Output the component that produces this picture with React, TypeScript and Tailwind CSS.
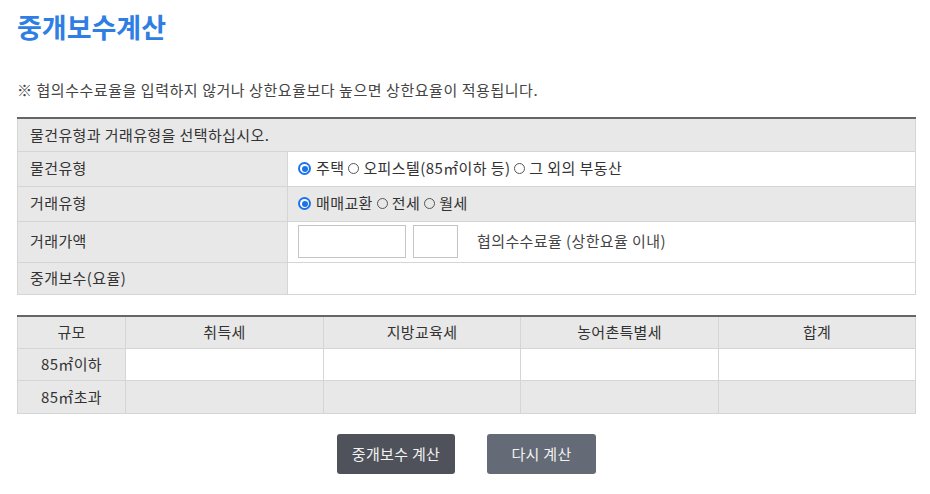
import React, { useState } from 'react';

const font = { fontFamily: '"Noto Sans CJK KR", "Noto Sans", sans-serif' };

const Radio: React.FC<{ checked: boolean; onClick: () => void }> = ({ checked, onClick }) =>
  checked ? (
    <span onClick={onClick} className="inline-flex w-[13px] h-[13px] rounded-full bg-[#1a73e8] items-center justify-center mr-[5px] cursor-pointer">
      <span className="w-[9px] h-[9px] rounded-full bg-white flex items-center justify-center">
        <span className="w-[6px] h-[6px] rounded-full bg-[#1a73e8]" />
      </span>
    </span>
  ) : (
    <span onClick={onClick} className="inline-block w-[11px] h-[11px] rounded-full border border-[#555] mr-[4px] ml-[4px] cursor-pointer" />
  );

const App: React.FC = () => {
  const [houseType, setHouseType] = useState(0);
  const [dealType, setDealType] = useState(0);
  const houseTypes = ['주택', '오피스텔(85㎡이하 등)', '그 외의 부동산'];
  const dealTypes = ['매매교환', '전세', '월세'];

  return (
    <div className="bg-white w-[930px] h-[494px] text-[#333]" style={font}>
      <div className="pl-[17px] w-[916px]">
        <h1 className="pt-[9px] text-[27px] leading-[36px] font-bold text-[#2f7ee3]">중개보수계산</h1>

        <p className="mt-[35px] text-[15px] leading-[20px] text-[#444] tracking-[0.55px]">
          ※ 협의수수료율을 입력하지 않거나 상한요율보다 높으면 상한요율이 적용됩니다.
        </p>

        <table className="mt-[17px] w-[899px] border-collapse border-t-2 border-t-[#666] text-[15px] tracking-[0.4px] text-[#333]">
          <tbody>
            <tr className="h-[33px] bg-[#e8e8e8]">
              <td colSpan={2} className="border border-[#d5d5d5] border-t-0 pl-[12px]">물건유형과 거래유형을 선택하십시오.</td>
            </tr>
            <tr className="h-[35px]">
              <td className="w-[270px] bg-[#e8e8e8] border border-[#d5d5d5] pl-[12px]">물건유형</td>
              <td className="border border-[#d5d5d5] pl-[10px] bg-white">
                <div className="flex items-center">
                  {houseTypes.map((t, i) => (
                    <span key={t} className="flex items-center">
                      <Radio checked={houseType === i} onClick={() => setHouseType(i)} />
                      {t}
                    </span>
                  ))}
                </div>
              </td>
            </tr>
            <tr className="h-[35px]">
              <td className="bg-[#e8e8e8] border border-[#d5d5d5] pl-[12px]">거래유형</td>
              <td className="border border-[#d5d5d5] pl-[10px] bg-[#e8e8e8]">
                <div className="flex items-center">
                  {dealTypes.map((t, i) => (
                    <span key={t} className="flex items-center">
                      <Radio checked={dealType === i} onClick={() => setDealType(i)} />
                      {t}
                    </span>
                  ))}
                </div>
              </td>
            </tr>
            <tr className="h-[41px]">
              <td className="bg-[#e8e8e8] border border-[#d5d5d5] pl-[12px]">거래가액</td>
              <td className="border border-[#d5d5d5] pl-[10px] bg-white">
                <div className="flex items-center">
                  <input type="text" className="w-[108px] h-[33px] border border-[#c4c4c4] bg-white outline-none px-1" />
                  <input type="text" className="w-[45px] h-[33px] border border-[#c4c4c4] bg-white outline-none px-1 ml-[7px]" />
                  <span className="ml-[19px] text-[#444]">협의수수료율 (상한요율 이내)</span>
                </div>
              </td>
            </tr>
            <tr className="h-[32px]">
              <td className="bg-[#e8e8e8] border border-[#d5d5d5] pl-[12px]">중개보수(요율)</td>
              <td className="border border-[#d5d5d5] bg-white"></td>
            </tr>
          </tbody>
        </table>

        <table className="mt-[20px] w-[899px] border-collapse border-t-2 border-t-[#666] text-[15px] tracking-[0.3px] text-[#333] text-center">
          <thead>
            <tr className="h-[33px] bg-[#e8e8e8]">
              <th className="w-[108px] font-normal border border-[#d5d5d5] border-t-0">규모</th>
              <th className="w-[198px] font-normal border border-[#d5d5d5] border-t-0">취득세</th>
              <th className="w-[197px] font-normal border border-[#d5d5d5] border-t-0">지방교육세</th>
              <th className="w-[198px] font-normal border border-[#d5d5d5] border-t-0">농어촌특별세</th>
              <th className="font-normal border border-[#d5d5d5] border-t-0">합계</th>
            </tr>
          </thead>
          <tbody>
            <tr className="h-[32px] bg-white">
              <td className="bg-[#e8e8e8] border border-[#d5d5d5]">85㎡이하</td>
              <td className="border border-[#d5d5d5]"></td>
              <td className="border border-[#d5d5d5]"></td>
              <td className="border border-[#d5d5d5]"></td>
              <td className="border border-[#d5d5d5]"></td>
            </tr>
            <tr className="h-[33px] bg-[#e8e8e8]">
              <td className="border border-[#d5d5d5]">85㎡초과</td>
              <td className="border border-[#d5d5d5]"></td>
              <td className="border border-[#d5d5d5]"></td>
              <td className="border border-[#d5d5d5]"></td>
              <td className="border border-[#d5d5d5]"></td>
            </tr>
          </tbody>
        </table>

        <div className="mt-[20px] flex justify-center gap-[32px]">
          <button className="w-[118px] h-[40px] rounded-[3px] bg-[#50525b] text-[#f2f2f2] text-[15px] tracking-[0.3px]">중개보수 계산</button>
          <button className="w-[109px] h-[40px] rounded-[3px] bg-[#646a76] text-[#f2f2f2] text-[15px] tracking-[0.3px]">다시 계산</button>
        </div>
      </div>
    </div>
  );
};

export default App;
